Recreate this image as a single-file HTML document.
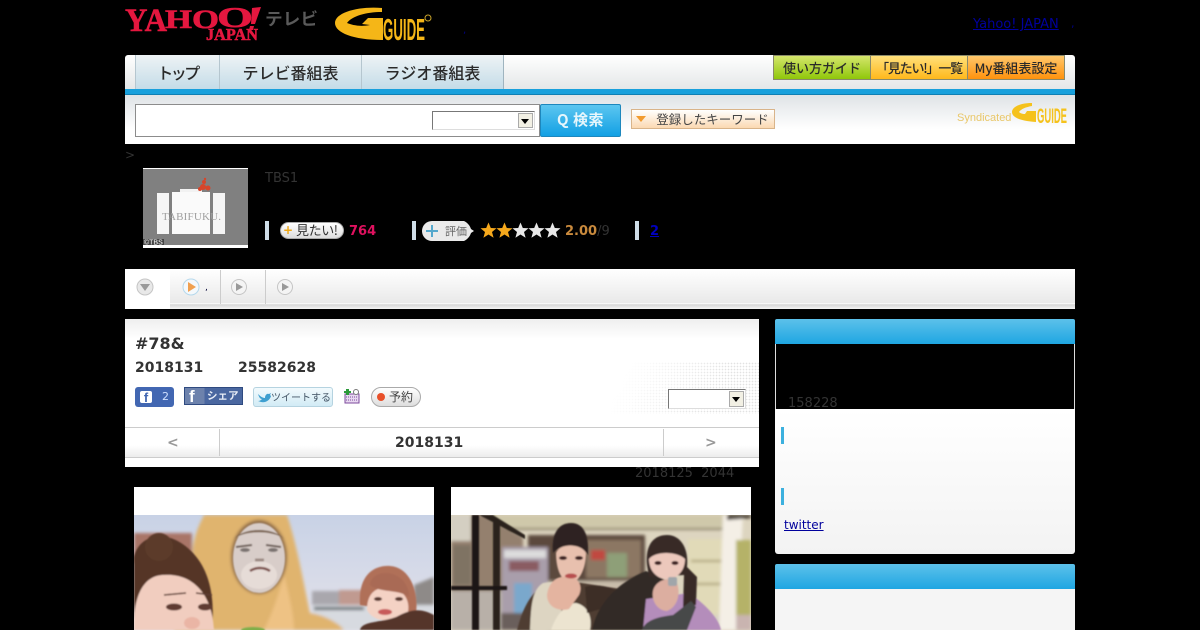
<!DOCTYPE html>
<html lang="ja"><head><meta charset="utf-8"><title>TBS</title>
<style>
html,body{margin:0;padding:0;background:#000;width:1200px;height:630px;overflow:hidden}
body{position:relative;font-family:"DejaVu Sans","Noto Sans CJK JP",sans-serif;font-size:13px;color:#333}
.a{position:absolute;white-space:nowrap}
.j{font-family:"Noto Sans CJK JP","DejaVu Sans",sans-serif}
.tab{position:absolute;top:55px;height:34px;background:linear-gradient(#eef3f5,#c4dce8);border-right:1px solid #9fb4bf;border-left:1px solid #b5c6cf;text-align:center;line-height:35px;font-size:16px;font-weight:500;color:#2a2a2a;box-sizing:border-box;font-family:"Noto Sans CJK JP",sans-serif}
.tb{position:absolute;top:55px;height:25px;line-height:24px;text-align:center;font-size:13px;font-weight:500;color:#2a2a2a;box-sizing:border-box;border:1px solid #8a8a6a;font-family:"Noto Sans CJK JP",sans-serif}
.sel{position:absolute;background:#fff;border:1px solid;border-color:#777 #ddd #ddd #777;box-sizing:border-box}
.sel i{position:absolute;right:1px;top:1px;bottom:1px;width:15px;background:#f2f0e4;border:1px solid #aaa;box-sizing:border-box}
.sel i:after{content:"";position:absolute;left:2px;top:5px;border:4px solid transparent;border-top:5px solid #000;border-bottom:0}
.sep{position:absolute;top:221px;width:4px;height:19px;background:#cfdde8}
.head{position:absolute;left:775px;width:300px;height:25px;background:linear-gradient(#5cc1ea,#1fa6e2);border-radius:2px 2px 0 0}
.bar{position:absolute;left:781px;width:3px;height:17px;background:#3cb0de}
</style></head><body>

<!-- Yahoo logo -->
<svg class="a" style="left:125px;top:0" width="200" height="46" viewBox="0 0 200 46">
<g fill="#e5173f" stroke="#e5173f" stroke-width=".6" font-family="Liberation Serif,serif" font-weight="bold">
<text x="0" y="31" font-size="33" textLength="42" lengthAdjust="spacingAndGlyphs">YA</text>
<text x="40" y="28" font-size="26" textLength="54" lengthAdjust="spacingAndGlyphs">HO</text>
<text x="92" y="27" font-size="29" textLength="36" lengthAdjust="spacingAndGlyphs">O</text>
<text x="81" y="40" font-size="17" textLength="52" lengthAdjust="spacingAndGlyphs">JAPAN</text>
</g>
<path d="M127 8l9-1-6 17-4 0zM125 26l4 0-1 4-4 0z" fill="#e5173f"/>
<text x="140" y="25" font-size="17" font-weight="bold" fill="#5a5a5a" font-family="Noto Sans CJK JP,sans-serif" textLength="53" lengthAdjust="spacingAndGlyphs">テレビ</text>
</svg>

<!-- G guide logo -->
<svg class="a" style="left:330px;top:0" width="110" height="46" viewBox="0 0 110 46">
<path d="M52 8C30 6 5 12 5 23 5 33 24 40 53 40L53 18 38 18 32 24 40 25C30 27 22 25 17 23 22 16 36 12 52 12Z" fill="#f5b617"/>
<text x="53" y="40" font-size="31" font-weight="bold" fill="#f5b617" font-family="Liberation Sans,sans-serif" textLength="42" lengthAdjust="spacingAndGlyphs">GUIDE</text>
<circle cx="98" cy="18" r="3" fill="none" stroke="#c9a32a"/>
</svg>
<div class="a" style="left:463px;top:25px;color:#000080;font-size:10px">,</div>
<a class="a" style="left:973px;top:17px;color:#00009c;text-decoration:underline;font-size:13px">Yahoo! JAPAN</a>
<div class="a" style="left:1071px;top:17px;color:#000080;font-size:11px">,</div>

<!-- nav -->
<div class="a" style="left:125px;top:55px;width:950px;height:34px;background:linear-gradient(#fff,#e4e7e8);border-radius:3px 3px 0 0"></div>
<div class="tab" style="left:135px;width:85px;letter-spacing:-2.5px">トップ</div>
<div class="tab" style="left:219px;width:143px">テレビ番組表</div>
<div class="tab" style="left:361px;width:143px">ラジオ番組表</div>
<div class="tb" style="left:773px;width:98px;background:linear-gradient(#d4e66c,#8fc70a)">使い方ガイド</div>
<div class="tb" style="left:870px;width:98px;background:linear-gradient(#ffe07a,#ffb81c);letter-spacing:-1.2px">「見たい!」一覧</div>
<div class="tb" style="left:967px;width:98px;background:linear-gradient(#ffc76b,#ff920d)">My番組表設定</div>
<div class="a" style="left:125px;top:89px;width:950px;height:6px;background:#18a0dc;border-bottom:1px solid #0f7fb3;box-sizing:border-box"></div>

<!-- search -->
<div class="a" style="left:125px;top:95px;width:950px;height:49px;background:linear-gradient(#dfe3e6,#fff 70%)"></div>
<div class="a" style="left:135px;top:104px;width:405px;height:33px;background:#fff;border:1px solid #8c8c8c;box-sizing:border-box"></div>
<div class="sel" style="left:432px;top:111px;width:103px;height:19px"><i></i></div>
<div class="a j" style="left:540px;top:104px;width:81px;height:33px;background:linear-gradient(#5cc6f0,#12a0e4);border:1px solid #1d87bd;box-sizing:border-box;border-radius:2px;color:#e6f6fc;font-weight:bold;font-size:15px;line-height:29px;text-align:center;letter-spacing:.5px">Q 検索</div>
<div class="a j" style="left:631px;top:109px;width:144px;height:20px;background:linear-gradient(#fff,#fbd9b2);border:1px solid #d9b48a;box-sizing:border-box;font-size:12.5px;line-height:18px;padding-left:19px;text-align:center;color:#444">登録したキーワード</div>
<div class="a" style="left:636px;top:116px;border:5px solid transparent;border-top:6px solid #f29b2e;border-bottom:0"></div>
<div class="a" style="left:957px;top:112px;font-family:'Liberation Sans',sans-serif;font-size:11px;color:#e9c769">Syndicated</div>
<svg class="a" style="left:1010px;top:101px" width="60" height="26" viewBox="0 0 60 26">
<path d="M22 2C10 2 2 6 2 11 2 17 12 20 26 21L26 10 17 10 15 13C12 13 10 12 9 11 11 8 16 6 22 5Z" fill="#f5c21c"/>
<text x="27" y="22" font-size="21" font-weight="bold" fill="#f5c21c" font-family="Liberation Sans,sans-serif" textLength="30" lengthAdjust="spacingAndGlyphs">GUIDE</text>
</svg>

<div class="a" style="left:125px;top:148px;font-size:12px;color:#333">&gt;</div>

<!-- info -->
<svg class="a" style="left:143px;top:168px" width="105" height="80" viewBox="0 0 105 80">
<rect width="105" height="80" fill="#fff"/><rect y="1" width="105" height="76" fill="#808080"/>
<rect x="14" y="25" width="12" height="41" fill="#f5f5f5"/><rect x="29" y="24" width="38" height="42" fill="#fafafa"/><rect x="70" y="25" width="12" height="41" fill="#f5f5f5"/>
<rect x="37" y="21" width="22" height="3" fill="#f2f2f2"/>
<g fill="#d6452b"><circle cx="60" cy="19" r="3"/><circle cx="65" cy="20" r="2.500"/><circle cx="57" cy="21" r="2"/><circle cx="61" cy="14" r="2"/><circle cx="62" cy="11" r="1.200"/></g>
<text x="19" y="52" font-size="11" font-family="Liberation Serif,serif" fill="#a0a0a0" textLength="59">TABIFUKU.</text>
<rect x="0" y="71" width="21" height="6" fill="#444"/>
<text x="1" y="76.500" font-size="7" fill="#fff" font-family="Liberation Sans,sans-serif">©TBS</text>
</svg>
<div class="a" style="left:265px;top:171px;color:#333">TBS1</div>
<div class="sep" style="left:265px"></div>
<div class="a j" style="left:280px;top:222px;width:64px;height:17px;background:linear-gradient(#fff,#ddd);border:1px solid #aaa;box-sizing:border-box;border-radius:9px;font-size:13px;line-height:14px;letter-spacing:-.4px;color:#333;padding-left:15px">見たい!</div>
<div class="a" style="left:283px;top:223px;color:#f0a818;font-weight:bold;font-size:12px;line-height:14px">+</div>
<div class="a" style="left:349px;top:224px;color:#e0115f;font-weight:bold;font-size:13px">764</div>
<div class="sep" style="left:412px"></div>
<svg class="a" style="left:422px;top:220px" width="54" height="22" viewBox="0 0 54 22"><path d="M10 1H42C46 3 48 6 49 9L52 11 49 13C48 16 46 19 42 21H10A10 10 0 0 1 10 1Z" fill="#eaeaea"/><path d="M10 5V17M4 11H16" stroke="#55a8cc" stroke-width="2"/><text x="23" y="15" font-size="11" fill="#666" font-family="Noto Sans CJK JP,sans-serif">評価</text></svg>
<svg class="a" style="left:480px;top:222px" width="82" height="17" viewBox="0 0 82 17">
<defs><polygon id="s" points="8.5,0.5 10.8,6 16.5,6.3 12,10 13.6,15.8 8.5,12.5 3.4,15.8 5,10 .5,6.3 6.2,6"/></defs>
<use href="#s" fill="#f5a81c"/><use href="#s" x="16" fill="#f5a81c"/><use href="#s" x="32" fill="#e8e8e8"/><use href="#s" x="48" fill="#e8e8e8"/><use href="#s" x="64" fill="#e8e8e8"/>
</svg>
<div class="a" style="left:565px;top:224px;color:#c98a3d;font-weight:bold;font-size:13px">2.00<span style="color:#333;font-weight:normal">/9</span></div>
<div class="sep" style="left:635px"></div>
<div class="a" style="left:650px;top:224px;color:#0000c0;font-weight:bold;text-decoration:underline">2</div>

<!-- tabs bar -->
<div class="a" style="left:125px;top:269px;width:950px;height:40px;background:linear-gradient(#fff,#e9e9e9 85%,#fff 87%,#d5d5d5 89%,#f5f5f5)"></div>
<div class="a" style="left:125px;top:270px;width:45px;height:39px;background:#fff"></div>
<div class="a" style="left:220px;top:270px;width:1px;height:34px;background:#ccc"></div>
<div class="a" style="left:265px;top:270px;width:1px;height:34px;background:#ccc"></div>
<svg class="a" style="left:135px;top:277px" width="170" height="20" viewBox="0 0 170 20">
<circle cx="10" cy="10" r="8" fill="#e8e8e8" stroke="#c5c5c5"/><path d="M5 7H15L10 14Z" fill="#999"/>
<circle cx="56" cy="10" r="8" fill="#f4f8fb" stroke="#b5d8ec"/><path d="M53 5V15L61 10Z" fill="#f0a050"/>
<circle cx="104" cy="10" r="7.500" fill="#f4f4f4" stroke="#c5c5c5"/><path d="M101 6V14L108 10Z" fill="#999"/>
<circle cx="150" cy="10" r="7.500" fill="#f4f4f4" stroke="#c5c5c5"/><path d="M147 6V14L154 10Z" fill="#999"/>
</svg>
<div class="a" style="left:205px;top:283px;color:#003;font-size:9px">,</div>

<!-- main panel -->
<div class="a" style="left:125px;top:319px;width:634px;height:148px;background:linear-gradient(#eee,#fff 20px)"></div>
<div class="a" style="left:580px;top:362px;width:179px;height:52px;background-image:radial-gradient(#e2e2e2 35%,transparent 40%);background-size:3px 3px;-webkit-mask-image:linear-gradient(115deg,transparent 25%,#000 75%)"></div>
<div class="a" style="left:135px;top:334px;font-weight:bold;font-size:16px;color:#333">#78&amp;</div>
<div class="a" style="left:135px;top:360px;font-weight:bold;font-size:14px;color:#333">2018131</div>
<div class="a" style="left:238px;top:360px;font-weight:bold;font-size:14px;color:#333">25582628</div>
<div class="a" style="left:135px;top:387px;width:39px;height:20px;background:#4267b2;border-radius:3px"></div>
<div class="a" style="left:140px;top:391px;width:12px;height:12px;background:#fff;border-radius:2px;color:#4267b2;font:bold 13px/13px 'Liberation Sans',sans-serif;text-align:center">f</div>
<div class="a" style="left:162px;top:390px;font-size:11px;color:#cfe0ff">2</div>
<div class="a j" style="left:184px;top:387px;width:59px;height:18px;background:linear-gradient(90deg,#6d82ac 0,#6d82ac 34%,#4a67a0 34%);border:1px solid #2f4a80;box-sizing:border-box;color:#e8edf6;font-size:10.5px;font-weight:bold;line-height:16px;padding-left:22px">シェア</div>
<div class="a" style="left:189px;top:388px;color:#fff;font:bold 17px/18px 'Liberation Sans',sans-serif">f</div>
<div class="a j" style="left:253px;top:387px;width:80px;height:20px;background:linear-gradient(#f2fafd,#d2ebf5);border:1px solid #b5d3e0;box-sizing:border-box;border-radius:3px;color:#456;font-size:10px;line-height:18px;padding-left:17px">ツイートする</div>
<svg class="a" style="left:257px;top:391px" width="14" height="12" viewBox="0 0 14 12"><path d="M1 3C4 6 6 7 8 7 8 4 10 2 12 3L14 2 13 4 14 5C13 9 9 12 4 11L1 10C3 10 4 9 5 8 3 8 2 6 1 3Z" fill="#3f9fd0"/></svg>
<svg class="a" style="left:344px;top:388px" width="16" height="16" viewBox="0 0 16 16"><rect x="1" y="6" width="14" height="9" fill="#e8d8f0" stroke="#7c4a9c"/><path d="M2 9H14M2 12H14" stroke="#7c4a9c" stroke-dasharray="1 1"/><path d="M2 1H5V3H7V5H5V7H2V5H0V3H2Z" fill="#2c9a3a"/><circle cx="12" cy="4" r="2.500" fill="#fff" stroke="#777"/></svg>
<div class="a j" style="left:371px;top:387px;width:50px;height:20px;background:linear-gradient(#fff,#ddd);border:1px solid #aaa;box-sizing:border-box;border-radius:10px;font-size:12px;line-height:17px;padding-left:17px;color:#444">予約</div>
<div class="a" style="left:377px;top:393px;width:8px;height:8px;background:#e8502a;border-radius:50%"></div>
<div class="sel" style="left:668px;top:389px;width:78px;height:20px"><i></i></div>

<div class="a" style="left:125px;top:427px;width:634px;height:31px;box-sizing:border-box;border-top:1px solid #ccc;border-bottom:1px solid #ccc;background:linear-gradient(#fff 60%,#ececec)"></div>
<div class="a" style="left:219px;top:429px;width:1px;height:27px;background:#ccc"></div>
<div class="a" style="left:663px;top:429px;width:1px;height:27px;background:#ccc"></div>
<div class="a" style="left:167px;top:435px;font-size:14px;color:#999;font-weight:bold">&lt;</div>
<div class="a" style="left:395px;top:435px;font-size:14px;font-weight:bold;color:#333">2018131</div>
<div class="a" style="left:705px;top:435px;font-size:14px;color:#999;font-weight:bold">&gt;</div>
<div class="a" style="left:635px;top:466px;color:#333;font-size:13px">2018125&nbsp; 2044</div>

<!-- cards -->
<div class="a" style="left:134px;top:487px;width:300px;height:143px;background:#fff"></div>
<div class="a" style="left:451px;top:487px;width:300px;height:143px;background:#fff"></div>

<svg class="a" style="left:134px;top:515px" width="300" height="115" viewBox="0 0 300 115">
<defs>
<linearGradient id="sk" x1="0" y1="0" x2="0" y2="1"><stop offset="0" stop-color="#c8d2e6"/><stop offset="1" stop-color="#e4e2ea"/></linearGradient>
<filter id="b" x="-10%" y="-10%" width="120%" height="120%"><feGaussianBlur stdDeviation="1.5"/></filter>
<filter id="b2" x="-10%" y="-10%" width="120%" height="120%"><feGaussianBlur stdDeviation=".9"/></filter>
</defs>
<rect width="300" height="115" fill="url(#sk)"/>
<g filter="url(#b)">
<rect x="0" y="18" width="58" height="30" fill="#a97468"/>
<rect x="178" y="76" width="60" height="22" fill="#a9a7ad"/>
<path d="M205 75H240V95H205Z" fill="#c09a90"/>
<path d="M280 70L300 62V95H280Z" fill="#8e8a88"/>
<rect x="178" y="90" width="122" height="25" fill="#d7dae0"/>
<rect x="180" y="92" width="50" height="3" fill="#555e62"/>
<path d="M70 0H153C163 30 170 70 176 98 190 100 205 108 210 115H40L60 50C55 30 65 10 70 0Z" fill="#e0b46e"/>
<path d="M150 60C155 80 160 100 160 115H130C140 95 146 75 150 60Z" fill="#eec284"/>
<ellipse cx="125" cy="42" rx="28" ry="37" fill="#8d6a48"/>
</g>
<g filter="url(#b2)">
<ellipse cx="125" cy="43" rx="26" ry="35" fill="#d8cdc9"/>
<ellipse cx="125" cy="60" rx="18" ry="14" fill="#e6dcd7"/>
<path d="M100 24C110 15 140 15 150 24 140 12 110 12 100 24Z" fill="#77604d"/>
<path d="M102 32L118 30M132 30L147 32" stroke="#6b5b55" stroke-width="2" fill="none"/>
<ellipse cx="111" cy="35" rx="5" ry="2" fill="#7a7270"/><ellipse cx="139" cy="35" rx="5" ry="2" fill="#7a7270"/>
<path d="M121 45H130" stroke="#9c8a83" stroke-width="3"/>
<path d="M116 56C122 52 130 52 136 56" stroke="#7a4e4a" stroke-width="2.500" fill="none"/>
<path d="M0 42C5 20 30 15 50 30 70 45 82 70 78 115H0Z" fill="#553627"/>
<circle cx="25" cy="32" r="14" fill="#5c3a2a"/>
<path d="M0 110C0 80 10 60 30 60 55 58 78 75 80 115H0Z" fill="#f1cdbf"/>
<ellipse cx="40" cy="92" rx="8" ry="3.500" fill="#5f3a30"/><ellipse cx="71" cy="92" rx="7" ry="3.500" fill="#5f3a30"/>
<path d="M30 80L52 78M62 78L78 80" stroke="#5c3b30" stroke-width="1.500"/>
<ellipse cx="58" cy="108" rx="8" ry="6" fill="#eab5a5"/>
<ellipse cx="119" cy="115" rx="12" ry="3" fill="#7fae4a"/>
<path d="M226 90C224 60 240 50 256 51 275 52 285 75 282 98Z" fill="#b06f58"/>
<path d="M233 95C233 75 245 72 256 72 270 75 276 85 274 97 270 108 240 110 233 95Z" fill="#f4d2c4"/>
<path d="M236 70C245 78 265 74 275 82 275 66 262 58 252 58 242 58 236 64 236 70Z" fill="#a96a55"/>
<ellipse cx="244" cy="84" rx="4" ry="2" fill="#5c3a30"/><ellipse cx="265" cy="84" rx="4" ry="2" fill="#5c3a30"/>
<ellipse cx="251" cy="97" rx="7" ry="3" fill="#c85a5a"/>
<path d="M226 115C228 106 245 108 262 102 275 95 285 92 300 100V115Z" fill="#55342b"/>
</g>
</svg>

<svg class="a" style="left:451px;top:515px" width="300" height="115" viewBox="0 0 300 115">
<rect width="300" height="115" fill="#ddd5c0"/>
<g filter="url(#b)">
<rect x="40" y="0" width="240" height="13" fill="#cfc8aa"/>
<rect x="40" y="13" width="240" height="2" fill="#8b8268"/>
<rect x="77" y="20" width="117" height="46" fill="#5c4a3c"/>
<rect x="135" y="25" width="55" height="38" fill="#8c7764"/>
<rect x="156" y="38" width="20" height="24" fill="#8e9f78"/>
<rect x="140" y="35" width="14" height="10" fill="#c04a40"/>
<rect x="97" y="66" width="100" height="49" fill="#c9bdaa"/>
<path d="M0 0H32L72 22V115H0Z" fill="#94806e"/>
<rect x="0" y="0" width="20" height="26" fill="#d4cfc2"/>
<rect x="2" y="30" width="18" height="40" fill="#7f7363"/>
<rect x="0" y="76" width="52" height="39" fill="#b8b0a8"/>
<rect x="51" y="32" width="46" height="66" fill="#a99eab"/>
<rect x="53" y="35" width="42" height="8" fill="#dcdcdc"/>
<rect x="58" y="46" width="30" height="10" fill="#8a5c62"/>
<rect x="63" y="68" width="18" height="30" fill="#7aa8cc"/>
<rect x="50" y="98" width="30" height="17" fill="#6b5f5c"/>
<rect x="237" y="24" width="38" height="76" fill="#e1dab8"/>
<rect x="240" y="45" width="36" height="2" fill="#a89c70"/>
<rect x="240" y="68" width="36" height="2" fill="#a89c70"/>
<rect x="237" y="100" width="38" height="15" fill="#d9d3c4"/>
<path d="M272 0H292L286 115H268Z" fill="#f4efe6"/>
<rect x="285" y="25" width="15" height="75" fill="#b5b268"/>
<rect x="285" y="100" width="15" height="15" fill="#c9b4b0"/>
<path d="M276 0H300V3L276 5Z" fill="#3a3028"/>
</g>
<g filter="url(#b2)">
<rect x="21" y="0" width="7" height="115" fill="#1e1914"/>
<rect x="42" y="5" width="7" height="110" fill="#2a231c"/>
<rect x="0" y="71" width="56" height="4" fill="#1e1914"/>
<path d="M28 0H42L74 20 74 24Z" fill="#2a231c"/>
<path d="M66 115C70 100 78 72 105 64L170 74 178 115Z" fill="#4f3c33"/>
<path d="M79 115C80 95 80 75 92 68L104 66 110 90 112 115Z" fill="#ddd5c2"/>
<path d="M100 115C105 100 115 88 125 88 135 90 142 100 139 115Z" fill="#ece4d0"/>
<path d="M134 72C145 68 158 72 168 76L164 90 136 98Z" fill="#3d2f28"/>
<path d="M102 38C100 18 108 8 120 8 134 8 138 22 137 40 130 28 110 28 102 38Z" fill="#2d2320"/>
<path d="M105 38C108 28 130 28 135 38 135 54 128 67 120 68 110 67 105 54 105 38Z" fill="#e8c0ae"/>
<ellipse cx="112" cy="43" rx="4" ry="2" fill="#3c2420"/><ellipse cx="128" cy="43" rx="4" ry="2" fill="#3c2420"/>
<path d="M96 80C98 65 108 60 118 62 128 62 132 72 128 80L118 94C108 97 96 92 96 80Z" fill="#e4b4a0"/>
<ellipse cx="120" cy="61" rx="6" ry="2.500" fill="#b85050"/>
<path d="M141 115C146 90 165 68 195 56L225 70 230 115Z" fill="#332925"/>
<path d="M195 84L238 78C258 92 268 105 270 115H192Z" fill="#b48dbb"/>
<path d="M196 50C194 28 204 20 216 20 230 20 238 34 236 52L246 62 245 90 232 92 233 60 198 62Z" fill="#372a27"/>
<path d="M198 44C204 36 226 36 234 44 234 56 226 64 216 64 206 64 198 56 198 44Z" fill="#ecc8bc"/>
<ellipse cx="207" cy="48" rx="3.500" ry="2" fill="#3c2420"/><ellipse cx="224" cy="48" rx="3.500" ry="2" fill="#3c2420"/>
<path d="M202 76C204 66 218 60 226 68 230 80 226 92 216 96 207 96 200 86 202 76Z" fill="#dcaea0"/>
<rect x="217" y="62" width="9" height="9" rx="2" fill="#a0a6aa"/>
<path d="M191 115C194 106 205 102 222 100L240 86 245 92 236 115Z" fill="#47494a"/>
</g>
</svg>

<!-- sidebar -->
<div class="head" style="top:319px"></div>
<div class="a" style="left:775px;top:344px;width:300px;height:65px;box-sizing:border-box;border:1px solid #ddd;border-width:0 1px;background:#000"></div>
<div class="a" style="left:788px;top:396px;color:#333;font-size:13px">158228</div>
<div class="a" style="left:775px;top:409px;width:300px;height:145px;background:linear-gradient(#fff,#f3f3f3);border-radius:0 0 3px 3px"></div>
<div class="bar" style="top:427px"></div>
<div class="bar" style="top:488px"></div>
<a class="a" style="left:784px;top:518px;color:#00009c;text-decoration:underline;font-size:12px">twitter</a>
<div class="head" style="top:564px"></div>
<div class="a" style="left:775px;top:589px;width:300px;height:41px;background:#f5f5f5"></div>
</body></html>
